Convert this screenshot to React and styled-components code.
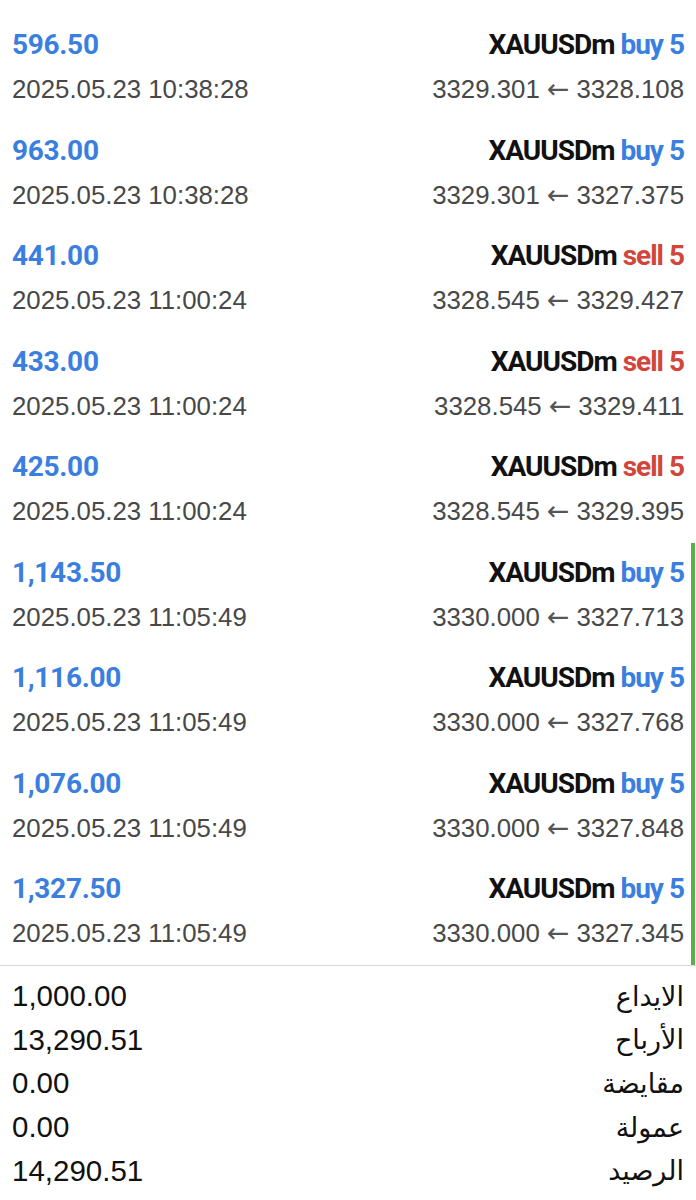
import React from 'react';
import styled, { createGlobalStyle } from 'styled-components';

const GlobalStyle = createGlobalStyle`
  body {
    margin: 0;
    background: #fff;
    font-family: "Liberation Sans", Arial, sans-serif;
  }
`;

const Page = styled.div`
  width: 696px;
  padding-top: 15px;
  background: #fff;
`;

const DealList = styled.div`
  display: flex;
  flex-direction: column;
`;

const DealRow = styled.div`
  display: grid;
  grid-template-columns: 1fr auto;
  grid-template-rows: 38px 38px;
  row-gap: 6px;
  height: 105.5px;
  box-sizing: border-box;
  padding: 11px 7px 0 12px;
  margin-right: 1px;
  border-right: 4px solid ${props => props.marked ? '#56b248' : 'transparent'};
`;

const Profit = styled.div`
  font-family: Roboto, "Liberation Sans", sans-serif;
  font-weight: 700;
  font-size: 28px;
  line-height: 38px;
  color: #3a7fe0;
  letter-spacing: -0.3px;
`;

const Symbol = styled.div`
  font-family: Roboto, "Liberation Sans", sans-serif;
  font-weight: 700;
  font-size: 28px;
  line-height: 38px;
  color: #111;
  text-align: right;
  letter-spacing: -1px;
`;

const Side = styled.span`
  color: ${props => props.type === 'sell' ? '#d2453a' : '#3a7fe0'};
`;

const SubText = styled.div`
  font-size: 25.8px;
  line-height: 38px;
  color: #484848;
  text-align: ${props => props.right ? 'right' : 'left'};
`;

const Arrow = styled.span`
  display: inline-block;
  font-family: "DejaVu Sans", sans-serif;
  font-size: 27px;
  margin: 0 7px;
  color: #555;
`;

const Summary = styled.div`
  border-top: 1px solid #d8d8d8;
  padding-top: 9px;
  display: flex;
  flex-direction: column;
`;

const SummaryRow = styled.div`
  display: flex;
  justify-content: space-between;
  align-items: center;
  height: 43.6px;
  padding: 0 12px;
  font-size: 29.5px;
  color: #111;
`;

const Label = styled.span`
  direction: rtl;
  font-family: "DejaVu Sans", "Noto Sans", sans-serif;
  font-size: 27px;
`;

const deals = [
  { profit: '596.50', side: 'buy', time: '2025.05.23 10:38:28', open: '3329.301', close: '3328.108' },
  { profit: '963.00', side: 'buy', time: '2025.05.23 10:38:28', open: '3329.301', close: '3327.375' },
  { profit: '441.00', side: 'sell', time: '2025.05.23 11:00:24', open: '3328.545', close: '3329.427' },
  { profit: '433.00', side: 'sell', time: '2025.05.23 11:00:24', open: '3328.545', close: '3329.411' },
  { profit: '425.00', side: 'sell', time: '2025.05.23 11:00:24', open: '3328.545', close: '3329.395' },
  { profit: '1,143.50', side: 'buy', time: '2025.05.23 11:05:49', open: '3330.000', close: '3327.713', marked: true },
  { profit: '1,116.00', side: 'buy', time: '2025.05.23 11:05:49', open: '3330.000', close: '3327.768', marked: true },
  { profit: '1,076.00', side: 'buy', time: '2025.05.23 11:05:49', open: '3330.000', close: '3327.848', marked: true },
  { profit: '1,327.50', side: 'buy', time: '2025.05.23 11:05:49', open: '3330.000', close: '3327.345', marked: true },
];

const totals = [
  { label: 'الايداع', value: '1,000.00' },
  { label: 'الأرباح', value: '13,290.51' },
  { label: 'مقايضة', value: '0.00' },
  { label: 'عمولة', value: '0.00' },
  { label: 'الرصيد', value: '14,290.51' },
];

const App = () => (
  <>
    <GlobalStyle />
    <Page>
      <DealList>
        {deals.map((deal, i) => (
          <DealRow key={i} marked={deal.marked ? 1 : 0}>
            <Profit>{deal.profit}</Profit>
            <Symbol>
              XAUUSDm <Side type={deal.side}>{deal.side} 5</Side>
            </Symbol>
            <SubText>{deal.time}</SubText>
            <SubText right>
              {deal.open}<Arrow>←</Arrow>{deal.close}
            </SubText>
          </DealRow>
        ))}
      </DealList>
      <Summary>
        {totals.map((row, i) => (
          <SummaryRow key={i}>
            <span>{row.value}</span>
            <Label>{row.label}</Label>
          </SummaryRow>
        ))}
      </Summary>
    </Page>
  </>
);

export default App;
